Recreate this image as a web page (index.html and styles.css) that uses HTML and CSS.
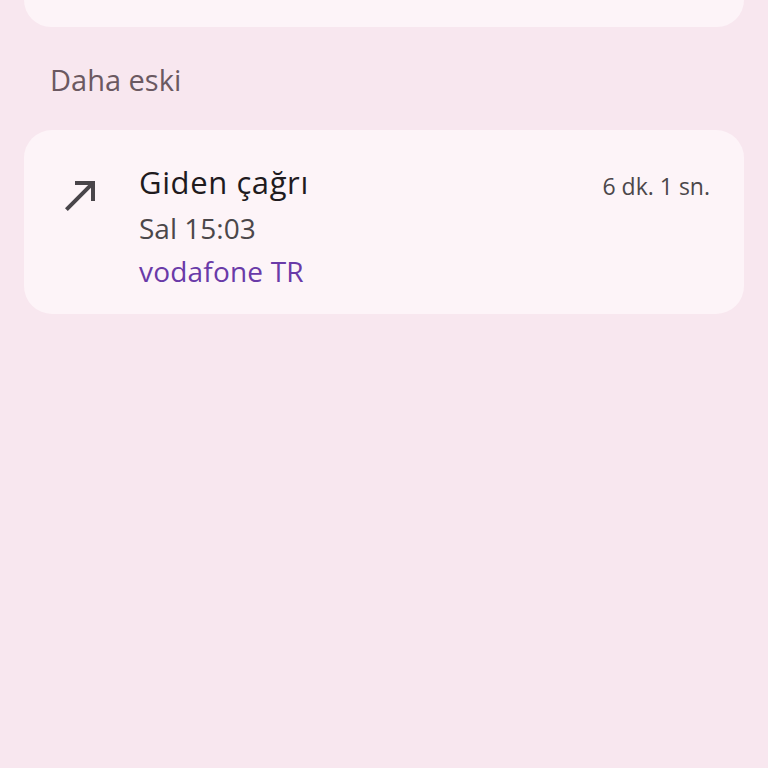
FILE: index.html
```html
<!DOCTYPE html>
<html lang="tr">

<head>
    <meta charset="UTF-8">
    <meta name="viewport" content="width=device-width, initial-scale=1.0">
    <title>Arama geçmişi</title>
    <link rel="stylesheet" href="styles.css">
</head>

<body>
    <div class="card card-prev"></div>

    <h2 class="section-title">Daha eski</h2>

    <div class="card call-item">
        <div class="call-icon">
            <svg viewBox="0 0 24 24" width="48" height="48">
                <path d="M9 5v2h6.59L4 18.59 5.41 20 17 8.41V15h2V5z" fill="#49454a"></path>
            </svg>
        </div>
        <div class="call-info">
            <div class="call-type">Giden çağrı</div>
            <div class="call-time">Sal 15:03</div>
            <div class="call-sim">vodafone TR</div>
        </div>
        <div class="call-duration">6 dk. 1 sn.</div>
    </div>
</body>

</html>
```

FILE: styles.css
```css
body {
    font-family: "Open Sans", Roboto, sans-serif;
    margin: 0;
    padding: 0;
    background-color: #f8e7ef;
    height: 768px;
}

.card {
    background: #fdf4f8;
    margin: 0 24px;
    border-radius: 28px;
}

.card-prev {
    height: 27px;
    border-radius: 0 0 28px 28px;
}

.section-title {
    margin: 0;
    padding: 38px 0 0 50px;
    height: 65px;
    font-size: 29px;
    font-weight: 400;
    color: #6b5961;
    line-height: 29px;
}

.call-item {
    display: flex;
    align-items: flex-start;
    height: 184px;
    box-sizing: border-box;
    padding: 32px 34px 0 33px;
}

.call-icon {
    width: 48px;
    height: 48px;
    margin-top: 9px;
    margin-right: 34px;
}

.call-info {
    flex: 1;
}

.call-type {
    font-size: 31px;
    line-height: 40px;
    letter-spacing: 0.6px;
    color: #1f1b1e;
}

.call-time {
    font-size: 28px;
    line-height: 36px;
    margin-top: 8px;
    color: #4b474a;
}

.call-sim {
    font-size: 28px;
    line-height: 36px;
    margin-top: 7px;
    letter-spacing: 0.2px;
    color: #6a3aa8;
}

.call-duration {
    font-size: 23px;
    line-height: 40px;
    margin-top: 4px;
    color: #4b474a;
}
```
